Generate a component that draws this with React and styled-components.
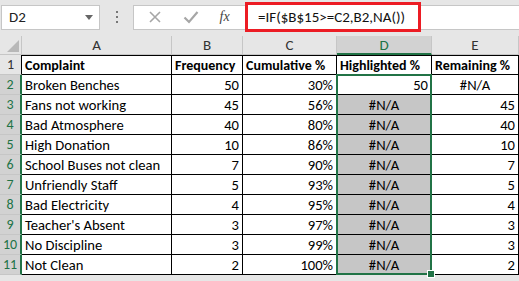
import styled, { createGlobalStyle } from "styled-components";

const Global = createGlobalStyle`
  body {
    margin: 0;
    background: #ffffff;
    font-family: Carlito, Lato, "Liberation Sans", sans-serif;
  }
`

const Shell = styled.div`
  width: 519px;
  height: 281px;
  overflow: hidden;
  background: #e6e6e6;
`

const FormulaBar = styled.div`
  display: flex;
  align-items: center;
  height: 36px;
  padding: 0 0 2px 1px;
  box-sizing: border-box;
`

const NameBox = styled.div`
  display: flex;
  align-items: center;
  justify-content: space-between;
  width: 99px;
  height: 25px;
  box-sizing: border-box;
  background: white;
  border: 1px solid #c6c6c6;
  padding: 0 6px 0 7px;
  font-size: 15px;
  color: #222;
`

const Caret = styled.span`
  width: 0;
  height: 0;
  border-left: 4px solid transparent;
  border-right: 4px solid transparent;
  border-top: 5px solid #666;
`

const Dots = styled.div`
  display: flex;
  flex-direction: column;
  gap: 3px;
  width: 33px;
  align-items: center;
  span {
    width: 2px;
    height: 2px;
    background: #777;
  }
`

const FnBox = styled.div`
  display: flex;
  align-items: center;
  justify-content: space-around;
  width: 111px;
  height: 25px;
  box-sizing: border-box;
  background: white;
  border: 1px solid #c6c6c6;
  border-right: none;
  padding: 0 4px;
`

const FxLabel = styled.span`
  font-family: "Liberation Serif", serif;
  font-style: italic;
  font-size: 14px;
  color: #444;
`

const FormulaInput = styled.div`
  flex: 1;
  display: flex;
  align-items: center;
  height: 25px;
  background: white;
  border-top: 1px solid #c6c6c6;
  border-bottom: 1px solid #c6c6c6;
  box-sizing: border-box;
  padding-left: 1px;
`

const Highlight = styled.div`
  height: 30px;
  margin: -3px 0;
  width: 176px;
  box-sizing: border-box;
  border: 3px solid #ec1c24;
  display: flex;
  align-items: center;
  padding-left: 10px;
  font-size: 15px;
  color: #111;
  background: white;
`

const Sheet = styled.div`
  display: grid;
  grid-template-columns: 22px 150px 71px 94px 95px 87px;
  grid-template-rows: 19px repeat(11, 20px);
  position: relative;
`

const Corner = styled.div`
  background: #e6e6e6;
  border-right: 1px solid #c6c6c6;
  border-bottom: 1px solid #c6c6c6;
  box-sizing: border-box;
  position: relative;
  &::after {
    content: "";
    position: absolute;
    right: 2px;
    bottom: 2px;
    border-left: 12px solid transparent;
    border-bottom: 12px solid #b8b8b8;
  }
`

const ColHead = styled.div`
  display: flex;
  align-items: center;
  justify-content: center;
  box-sizing: border-box;
  font-size: 15px;
  background: ${p => p.active ? '#d2d2d2' : '#e6e6e6'};
  color: ${p => p.active ? '#217346' : '#333'};
  border-right: 1px solid #c6c6c6;
  border-bottom: ${p => p.active ? '2px solid #217346' : '1px solid #c6c6c6'};
`

const RowHead = styled.div`
  display: flex;
  align-items: center;
  justify-content: center;
  box-sizing: border-box;
  font-size: 14px;
  background: ${p => p.active ? '#d2d2d2' : '#e6e6e6'};
  color: ${p => p.active ? '#217346' : '#333'};
  border-bottom: 1px solid #c6c6c6;
  border-right: ${p => p.active ? '2px solid #217346' : '1px solid #000'};
`

const Cell = styled.div`
  display: flex;
  align-items: center;
  justify-content: ${p => p.align === 'right' ? 'flex-end' : p.align === 'center' ? 'center' : 'flex-start'};
  box-sizing: border-box;
  padding: 0 3px 0 3px;
  font-size: ${p => p.bold ? '14px' : '14.6px'};
  font-weight: ${p => p.bold ? 700 : 400};
  color: #000;
  white-space: nowrap;
  overflow: hidden;
  background: ${p => p.shaded ? '#c6c6c6' : 'white'};
  border-right: 1px solid #000;
  border-bottom: 1px solid #000;
  border-top: ${p => p.first ? '1px solid #000' : 'none'};
`

const Selection = styled.div`
  grid-column: 5 / 6;
  grid-row: 3 / 13;
  position: absolute;
  top: -1px;
  left: -1px;
  right: 0;
  bottom: 0;
  border: 2px solid #217346;
  pointer-events: none;
  &::after {
    content: "";
    position: absolute;
    right: -5px;
    bottom: -5px;
    width: 6px;
    height: 6px;
    background: #217346;
    border: 1px solid white;
  }
`

const rows = [
  ['Broken Benches', 50, '30%', '50', '#N/A'],
  ['Fans not working', 45, '56%', '#N/A', 45],
  ['Bad Atmosphere', 40, '80%', '#N/A', 40],
  ['High Donation', 10, '86%', '#N/A', 10],
  ['School Buses not clean', 7, '90%', '#N/A', 7],
  ['Unfriendly Staff', 5, '93%', '#N/A', 5],
  ['Bad Electricity', 4, '95%', '#N/A', 4],
  ["Teacher's Absent", 3, '97%', '#N/A', 3],
  ['No Discipline', 3, '99%', '#N/A', 3],
  ['Not Clean', 2, '100%', '#N/A', 2],
]

function App() {
  return (
    <Shell>
      <Global />
      <FormulaBar>
        <NameBox>D2<Caret /></NameBox>
        <Dots><span /><span /><span /></Dots>
        <FnBox>
          <svg width="14" height="14" viewBox="0 0 14 14">
            <path d="M2 2L12 12M12 2L2 12" stroke="#a6a6a6" strokeWidth="1.6" />
          </svg>
          <svg width="16" height="14" viewBox="0 0 16 14">
            <path d="M1.5 7.5L6 12L14.5 2" stroke="#a6a6a6" strokeWidth="2.2" fill="none" />
          </svg>
          <FxLabel>fx</FxLabel>
        </FnBox>
        <FormulaInput>
          <Highlight>=IF($B$15&gt;=C2,B2,NA())</Highlight>
        </FormulaInput>
      </FormulaBar>
      <Sheet>
        <Corner />
        {['A', 'B', 'C', 'D', 'E'].map(l => <ColHead key={l} active={l === 'D'}>{l}</ColHead>)}
        <RowHead>1</RowHead>
        <Cell bold first>Complaint</Cell>
        <Cell bold first>Frequency</Cell>
        <Cell bold first>Cumulative %</Cell>
        <Cell bold first>Highlighted %</Cell>
        <Cell bold first>Remaining %</Cell>
        {rows.map((r, i) => [
          <RowHead key={'h' + i} active>{i + 2}</RowHead>,
          <Cell key={'a' + i}>{r[0]}</Cell>,
          <Cell key={'b' + i} align="right">{r[1]}</Cell>,
          <Cell key={'c' + i} align="right">{r[2]}</Cell>,
          <Cell key={'d' + i} align={i === 0 ? 'right' : 'center'} shaded={i !== 0}>{r[3]}</Cell>,
          <Cell key={'e' + i} align={i === 0 ? 'center' : 'right'}>{r[4]}</Cell>,
        ])}
        <Selection />
      </Sheet>
    </Shell>
  )
}

export default App;
